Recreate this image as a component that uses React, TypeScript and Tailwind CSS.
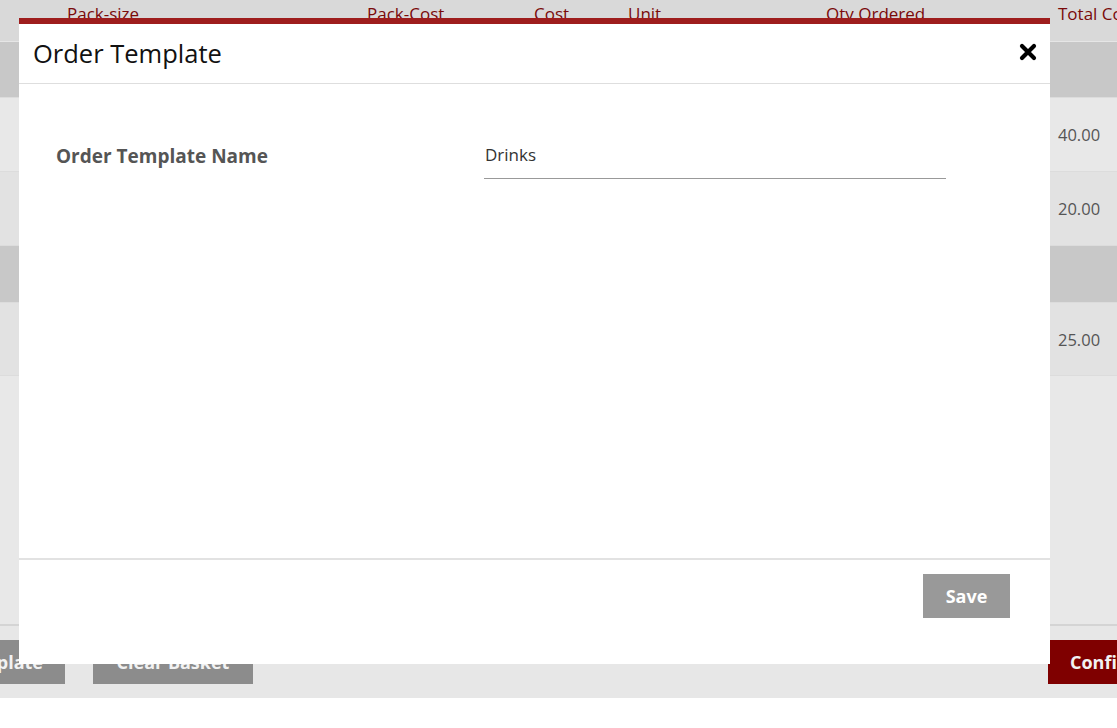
import React, { useState } from 'react';

const font = { fontFamily: '"Open Sans", "Noto Sans", sans-serif' };

const columns = [
  { label: '', width: 'w-[67px]' },
  { label: 'Pack-size', width: 'w-[300px]' },
  { label: 'Pack-Cost', width: 'w-[167px]' },
  { label: 'Cost', width: 'w-[94px]' },
  { label: 'Unit', width: 'w-[198px]' },
  { label: 'Qty Ordered', width: 'w-[232px]' },
  { label: 'Total Cost', width: 'w-[200px]' },
];

const rows = [
  { group: true, h: 'h-[56px]' },
  { total: '40.00', h: 'h-[74px]', bg: 'bg-[#e8e8e8]' },
  { total: '20.00', h: 'h-[74px]', bg: 'bg-[#e2e2e2]' },
  { group: true, h: 'h-[57px]' },
  { total: '25.00', h: 'h-[73px]', bg: 'bg-[#e2e2e2]' },
];

function CloseIcon() {
  return (
    <svg width="18" height="18" viewBox="0 0 18 18">
      <path d="M3 3 L15 15 M15 3 L3 15" stroke="#000" strokeWidth="4.2" strokeLinecap="round" />
    </svg>
  );
}

export default function App() {
  const [name, setName] = useState('Drinks');

  return (
    <div className="relative w-[1117px] h-[728px] overflow-hidden bg-white" style={font}>
      {/* basket table behind the dialog */}
      <div className="flex h-[42px] bg-[#d9d9d9] border-b border-[#e6e6e6]">
        {columns.map((c, i) => (
          <div key={i} className={`${c.width} shrink-0 pt-[2px] text-[17px] leading-[24px] text-[#7a0a0a] whitespace-nowrap`}>
            {c.label}
          </div>
        ))}
      </div>
      {rows.map((r, i) => (
        <div
          key={i}
          className={`${r.h} flex items-center pt-[2px] border-b border-[#dcdcdc] ${r.group ? 'bg-[#c8c8c8]' : r.bg}`}
        >
          {r.total && (
            <span className="ml-[1058px] text-[16.5px] text-[#555]">{r.total}</span>
          )}
        </div>
      ))}
      <div className="h-[250px] bg-[#e8e8e8] border-b-2 border-[#d4d4d4]"></div>
      <div className="h-[72px] bg-[#e7e7e7] flex items-start pt-[14px]">
        <button className="ml-[-90px] w-[155px] h-[44px] bg-[#8c8c8c] text-[#f2f2f2] font-bold text-[18px] text-right pr-[22px]">
          Save Template
        </button>
        <button className="ml-[28px] w-[160px] h-[44px] bg-[#8c8c8c] text-[#f2f2f2] font-bold text-[18px]">
          Clear Basket
        </button>
        <button className="ml-auto w-[69px] h-[44px] bg-[#7f0000] text-[#f2f2f2] font-bold text-[18px] text-left pl-[22px] whitespace-nowrap overflow-hidden">
          Confirm
        </button>
      </div>

      {/* dialog */}
      <div className="absolute left-[19px] top-[18px] w-[1031px] h-[646px] bg-white border-t-[6px] border-[#9e1d1d] flex flex-col">
        <div className="h-[60px] shrink-0 flex items-center justify-between pl-[14px] pr-[10px] border-b border-[#dedede]">
          <h2 className="text-[25.5px] font-medium text-[#111] leading-none">Order Template</h2>
          <button className="w-[24px] h-[24px] flex items-center justify-center mb-[3px]">
            <CloseIcon />
          </button>
        </div>
        <div className="flex-1 border-b-2 border-[#e2e2e2] pt-[48px]">
          <div className="flex items-start">
            <label className="w-[465px] shrink-0 pl-[37px] pt-[11px] text-[19px] font-bold text-[#555] leading-[26px]">
              Order Template Name
            </label>
            <input
              value={name}
              onChange={(e) => setName(e.target.value)}
              className="w-[462px] h-[47px] pl-[1px] pt-[3px] pb-[5px] text-[17px] text-[#333] border-b border-[#999] outline-none"
              style={font}
            />
          </div>
        </div>
        <div className="h-[104px] shrink-0 flex items-start justify-end pt-[14px] pr-[40px]">
          <button className="w-[87px] h-[44px] bg-[#999] text-white font-bold text-[18px]">Save</button>
        </div>
      </div>
    </div>
  );
}
